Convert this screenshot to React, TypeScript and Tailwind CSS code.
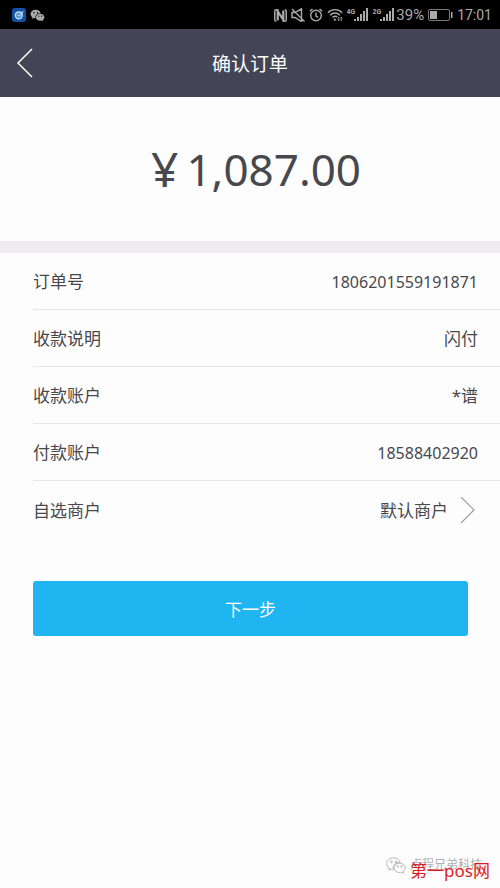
import type { ReactNode } from "react";

const FONT = "font-['Noto_Sans','Noto_Sans_CJK_SC',sans-serif]";

function WeChat({ className, outline = false }: { className: string; outline?: boolean }) {
  return (
    <svg
      viewBox="-1 -1 26 22"
      className={className}
      fill={outline ? "#ffffff" : "currentColor"}
      stroke={outline ? "currentColor" : "none"}
      strokeWidth="1.200"
      aria-hidden="true"
    >
      <path
        fillRule="evenodd"
        d="M9 0C4 0 0 3.300 0 7.500c0 2.300 1.300 4.400 3.300 5.800L2.500 16l3.200-1.600c1 .3 2 .500 3 .500A6.500 6.500 0 0 1 8.300 13c0-3.900 3.700-7 8.200-7h.9C16.700 2.600 13.200 0 9 0ZM6 4a1.200 1.200 0 1 1 0 2.400A1.200 1.200 0 0 1 6 4Zm6 0a1.200 1.200 0 1 1 0 2.400A1.200 1.200 0 0 1 12 4Z"
      />
      <path
        fillRule="evenodd"
        d="M16.700 7C12.600 7 9.300 9.700 9.300 13.100s3.300 6.100 7.400 6.100c.8 0 1.700-.1 2.400-.4l2.600 1.200-.7-2.200c1.800-1.100 3-2.800 3-4.700C24 9.700 20.700 7 16.700 7Zm-2.500 3.200a1 1 0 1 1 0 2 1 1 0 0 1 0-2Zm5 0a1 1 0 1 1 0 2 1 1 0 0 1 0-2Z"
      />
    </svg>
  );
}

function Signal({ label }: { label: string }) {
  return (
    <svg viewBox="0 0 22 14" className="h-[14px] w-[22px]" fill="currentColor" aria-label={label + " signal"}>
      <text x="-.5" y="6" fontSize="7" fontWeight="700" fontFamily="Roboto, sans-serif">
        {label}
      </text>
      <rect x="7" y="11" width="2" height="2" />
      <rect x="10" y="9" width="2" height="4" />
      <rect x="13" y="6" width="2" height="7" />
      <rect x="16" y="3" width="2" height="10" />
      <rect x="19" y="0" width="2" height="13" />
    </svg>
  );
}

function StatusBar() {
  return (
    <div className="flex h-[29px] items-center justify-between bg-black pt-px pr-2 pl-3 text-[#aaaaaa]">
      <div className="flex items-center gap-1">
        <svg viewBox="0 0 14 14" className="size-[14px]" aria-hidden="true">
          <rect width="14" height="14" rx="3" fill="#1450a4" />
          <circle cx="6.800" cy="7.300" r="3.400" fill="#3f83c4" stroke="#b9dcf2" strokeWidth="1.500" />
          <path d="M5.500 6.500 7 8.200l4.200-4.800" fill="none" stroke="#b9dcf2" strokeWidth="1.200" />
        </svg>
        <WeChat className="h-[13px] w-[15px]" />
      </div>
      <div className="flex items-center">
        <svg viewBox="0 0 14 14" className="mr-1 size-[13px]" fill="none" stroke="currentColor" aria-label="NFC">
          <path d="M5 .800H2.500Q.800.800.800 2.500v9q0 1.700 1.700 1.700M9 13.200h2.500q1.700 0 1.700-1.700v-9Q13.200.800 11.500.800" strokeWidth="1.600" />
          <path d="M4 12.500V2.500l6 9V1.500" strokeWidth="2.400" />
        </svg>
        <svg viewBox="0 0 14 14" className="mr-1 size-[14px]" fill="none" stroke="currentColor" strokeWidth="1.400" aria-label="Muted">
          <path d="M1 4.500v5h3l6.500 4V.800L4 4.500ZM1 1l12.500 12.500" />
        </svg>
        <svg viewBox="0 0 14 14" className="mr-1 size-[14px]" fill="none" stroke="currentColor" strokeWidth="1.400" aria-label="Alarm">
          <circle cx="7" cy="7.600" r="5.300" />
          <path d="M7 4.500V8l2.200 1.300M.800 3.300 3.500 1M13.200 3.300 10.500 1" />
        </svg>
        <svg viewBox="0 0 17 14" className="mr-1 h-[14px] w-[16px]" fill="none" stroke="currentColor" strokeWidth="1.500" aria-label="Wi-Fi">
          <path d="M1 4.500C5 .200 12 .200 16 4.500M3.300 7.200c3-3 7.400-3 10.400 0M5.700 9.700c1.800-1.700 3.800-1.700 5.200-.2" />
          <circle cx="8.300" cy="12" r="1.200" fill="currentColor" stroke="none" />
          <path d="M12.500 9v4M11.300 12l1.200 1.300M15 13.500v-4M16.200 10.500 15 9.200" strokeWidth="1" />
        </svg>
        <div className="mr-px flex gap-1">
          <Signal label="4G" />
          <Signal label="2G" />
        </div>
        <span className="font-['Roboto',sans-serif] text-[15px] leading-5">39%</span>
        <svg viewBox="0 0 25 12" className="mx-1 h-[12px] w-[25px]" aria-label="Battery">
          <rect x=".5" y=".5" width="21" height="11" rx="1.500" fill="none" stroke="currentColor" strokeOpacity=".7" />
          <rect x="2" y="2" width="7" height="8" fill="currentColor" />
          <rect x="23" y="3" width="1.500" height="6" fill="currentColor" />
        </svg>
        <span className="font-['Roboto',sans-serif] text-[14px] leading-5">17:01</span>
      </div>
    </div>
  );
}

function Row({ label, children }: { label: string; children: ReactNode }) {
  return (
    <div className="ml-[33px] flex h-[57px] items-center justify-between border-b border-[#e6e6e6] pt-[2px] pr-[22px] last:border-b-0">
      <dt>{label}</dt>
      <dd>{children}</dd>
    </div>
  );
}

export default function App() {
  return (
    <div className={`flex min-h-screen flex-col bg-[#fdfdfd] text-[17px] text-[#48484c] ${FONT}`}>
      <StatusBar />
      <header className="relative flex h-[68px] items-center justify-center bg-[#434456]">
        <button type="button" aria-label="返回" className="absolute left-[17px] text-white">
          <svg viewBox="0 0 16 30" className="h-[30px] w-[16px]" fill="none" stroke="currentColor" strokeWidth="1.500">
            <path d="M15 1 1 15l14 14" />
          </svg>
        </button>
        <h1 className="pt-[3px] text-[19px] text-white">确认订单</h1>
      </header>
      <main>
        <div className="flex h-36 items-center justify-center gap-2 pl-3 text-[44px]">
          <span className="text-[48px]">¥</span>
          <span>1,087.00</span>
        </div>
        <div className="h-3 bg-[#eeecee]" />
        <dl>
          <Row label="订单号">
            <span className="text-[16px]">1806201559191871</span>
          </Row>
          <Row label="收款说明">闪付</Row>
          <Row label="收款账户">*谱</Row>
          <Row label="付款账户">
            <span className="text-[16px]">18588402920</span>
          </Row>
          <Row label="自选商户">
            <button type="button" className="flex items-center gap-3">
              默认商户
              <svg viewBox="0 0 18 28" className="h-[28px] w-[18px]" fill="none" stroke="#a0a0a0" strokeWidth="1.200" aria-hidden="true">
                <path d="m1 0 13 13L1 26" />
              </svg>
            </button>
          </Row>
        </dl>
        <div className="mt-[43px] mr-8 ml-[33px]">
          <button type="submit" className="h-[55px] w-full rounded-[3px] bg-[#1fb5f1] pt-[3px] text-[17px] text-white">
            下一步
          </button>
        </div>
      </main>
      <footer className="relative mt-auto mr-[10px] mb-[5px] flex h-7 items-start justify-end">
        <div className="mr-2 flex items-center gap-1 text-[#b0b0b0]">
          <WeChat className="h-[17px] w-[20px]" outline />
          <span className="text-[12px] leading-5">卢程兄弟科技</span>
        </div>
        <span className="absolute right-0 bottom-0 text-[17px] leading-6 text-[#e01b22]">第一pos网</span>
      </footer>
    </div>
  );
}
